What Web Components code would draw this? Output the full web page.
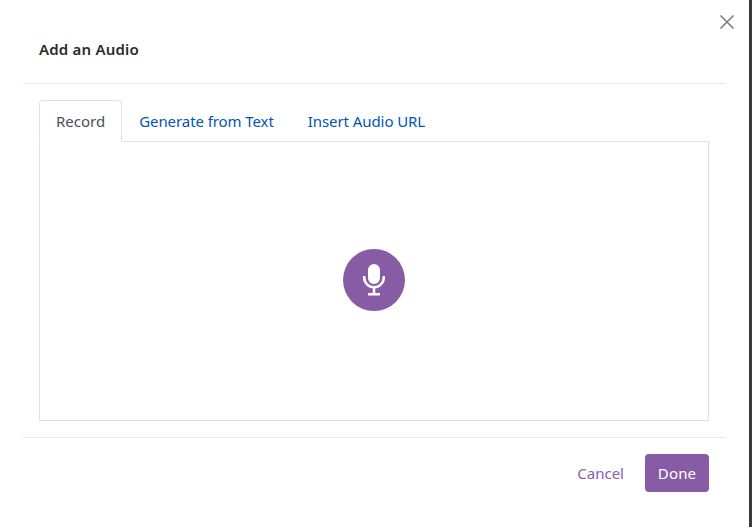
<!DOCTYPE html>
<html lang="en">
<head>
<meta charset="utf-8">
<title>Add an Audio</title>
<style>
  html, body { margin: 0; height: 100%; background: #fff; }
  body { font-family: "Noto Sans", "Open Sans", sans-serif; overflow: hidden; }
</style>
</head>
<body>
<audio-dialog heading="Add an Audio">
  <audio-tabs></audio-tabs>
</audio-dialog>
<script>
class AudioDialog extends HTMLElement {
  constructor() {
    super();
    this.attachShadow({ mode: "open" });
  }

  connectedCallback() {
    const heading = this.getAttribute("heading");
    this.shadowRoot.innerHTML = `
    <style>
      :host {
        display: block;
        position: relative;
        box-sizing: border-box;
        width: 752px;
        height: 527px;
        border-right: 3px solid #3b3b3b;
        background: #fff;
      }
      .close {
        position: absolute;
        top: 14px;
        right: 14px;
        width: 16px;
        height: 16px;
        padding: 0;
        border: 0;
        background: none;
      }
      .close svg { display: block; }
      header {
        box-sizing: border-box;
        height: 84px;
        margin: 0 24px 0 23px;
        padding: 39px 16px 0;
        border-bottom: 1px solid #e9e9ea;
      }
      h1 {
        margin: 0;
        font-size: 15px;
        line-height: 21px;
        font-weight: 600;
        letter-spacing: 0.2px;
        color: #2b2b2b;
      }
      main { padding: 16px 40px 16px 39px; }
      footer {
        box-sizing: border-box;
        height: 90px;
        margin: 0 24px 0 23px;
        padding: 16px 16px 0;
        border-top: 1px solid #e9e9ea;
        display: flex;
        justify-content: flex-end;
        align-items: flex-start;
        gap: 21px;
      }
      button { font: inherit; cursor: pointer; }
      .cancel {
        border: 0;
        padding: 0;
        height: 38px;
        background: none;
        color: #8a5ea8;
        font-size: 15px;
      }
      .done {
        width: 64px;
        height: 38px;
        border: 0;
        border-radius: 4px;
        padding: 0;
        background: #885ca5;
        color: #fff;
        font-size: 15px;
        font-weight: 400;
        letter-spacing: 0.15px;
      }
    </style>
    <button class="close" aria-label="Close">
      <svg width="16" height="16" viewBox="0 0 16 16" fill="none" stroke="#7d7d7d" stroke-width="1.6">
        <path d="M1.500 1.500 14.500 14.500M14.500 1.500 1.500 14.500"/>
      </svg>
    </button>
    <header><h1>${heading}</h1></header>
    <main><slot></slot></main>
    <footer>
      <button class="cancel">Cancel</button>
      <button class="done">Done</button>
    </footer>
    `;
  }
}

class AudioTabs extends HTMLElement {
  constructor() {
    super();
    this.attachShadow({ mode: "open" });
  }

  connectedCallback() {
    this.shadowRoot.innerHTML = `
    <style>
      :host { display: block; font-size: 15px; }
      nav {
        display: flex;
        height: 42px;
        box-sizing: border-box;
        border-bottom: 1px solid #dee2e6;
      }
      a {
        box-sizing: border-box;
        height: 42px;
        padding: 0 16px;
        line-height: 40px;
        letter-spacing: -0.08px;
        color: #0056b3;
        border: 1px solid transparent;
        border-radius: 4px 4px 0 0;
        text-decoration: none;
      }
      a.active {
        color: #495057;
        background: #fff;
        letter-spacing: 0;
        border-color: #dee2e6 #dee2e6 #fff;
      }
      .panel {
        box-sizing: border-box;
        height: 279px;
        border: 1px solid #dee2e6;
        border-top: 0;
        display: flex;
        align-items: center;
        justify-content: center;
      }
      .record {
        width: 62px;
        height: 62px;
        margin-bottom: 2px;
        border: 0;
        border-radius: 50%;
        padding: 0;
        background: #885ca5;
        display: flex;
        align-items: center;
        justify-content: center;
      }
      .record svg { display: block; }
    </style>
    <nav>
      <a class="active" href="#">Record</a>
      <a href="#">Generate from Text</a>
      <a href="#">Insert Audio URL</a>
    </nav>
    <div class="panel">
      <button class="record" aria-label="Record">
        <svg width="24" height="32" viewBox="0 0 24 32" fill="none">
          <rect x="6" y="0" width="12" height="20" rx="6" fill="#fff"/>
          <path d="M2.200 12v1.500a9.800 9.800 0 0 0 19.600 0V12M12 23V30M6 30.200h12" stroke="#fff" stroke-width="2.500"/>
        </svg>
      </button>
    </div>
    `;
  }
}

customElements.define("audio-dialog", AudioDialog);
customElements.define("audio-tabs", AudioTabs);
</script>
</body>
</html>
